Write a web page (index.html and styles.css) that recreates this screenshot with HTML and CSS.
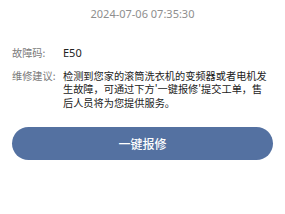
FILE: index.html
```html
<!DOCTYPE html>
<html lang="zh">
<head>
<meta charset="utf-8">
<link rel="stylesheet" href="styles.css">
</head>
<body>
<div class="page">
  <div class="time">2024-07-06 07:35:30</div>
  <div class="row fault">
    <div class="label">故障码:</div>
    <div class="value">E50</div>
  </div>
  <div class="row advice">
    <div class="label">维修建议:</div>
    <div class="value">检测到您家的滚筒洗衣机的变频器或者电机发生故障，可通过下方'一键报修'提交工单，售后人员将为您提供服务。</div>
  </div>
  <button class="btn">一键报修</button>
</div>
</body>
</html>
```

FILE: styles.css
```css
html, body {
  margin: 0;
  padding: 0;
  background: #ffffff;
}
.page {
  font-family: "Noto Sans CJK SC", "Noto Sans", sans-serif;
  padding: 7px 12px 0;
  display: flex;
  flex-direction: column;
}
.time {
  text-align: center;
  font-size: 11px;
  line-height: 14px;
  color: #8e8e8e;
  font-family: "Noto Sans", "Noto Sans CJK SC", sans-serif;
}
.row {
  display: flex;
  font-size: 10.2px;
  line-height: 13.5px;
}
.fault {
  margin-top: 24.75px;
}
.advice {
  margin-top: 9.5px;
}
.label {
  width: 51px;
  flex-shrink: 0;
  color: #7a7a7a;
}
.value {
  flex: 1;
  color: #222222;
  padding-right: 4px;
}
.fault .value {
  font-family: "Noto Sans", sans-serif;
  font-size: 11px;
}
.btn {
  margin-top: 17.75px;
  height: 33px;
  border: none;
  border-radius: 17px;
  background: #5471a1;
  color: #ffffff;
  font-family: "Noto Sans CJK SC", sans-serif;
  font-size: 12px;
  font-weight: 500;
  padding: 0;
  width: 261px;
}
```
